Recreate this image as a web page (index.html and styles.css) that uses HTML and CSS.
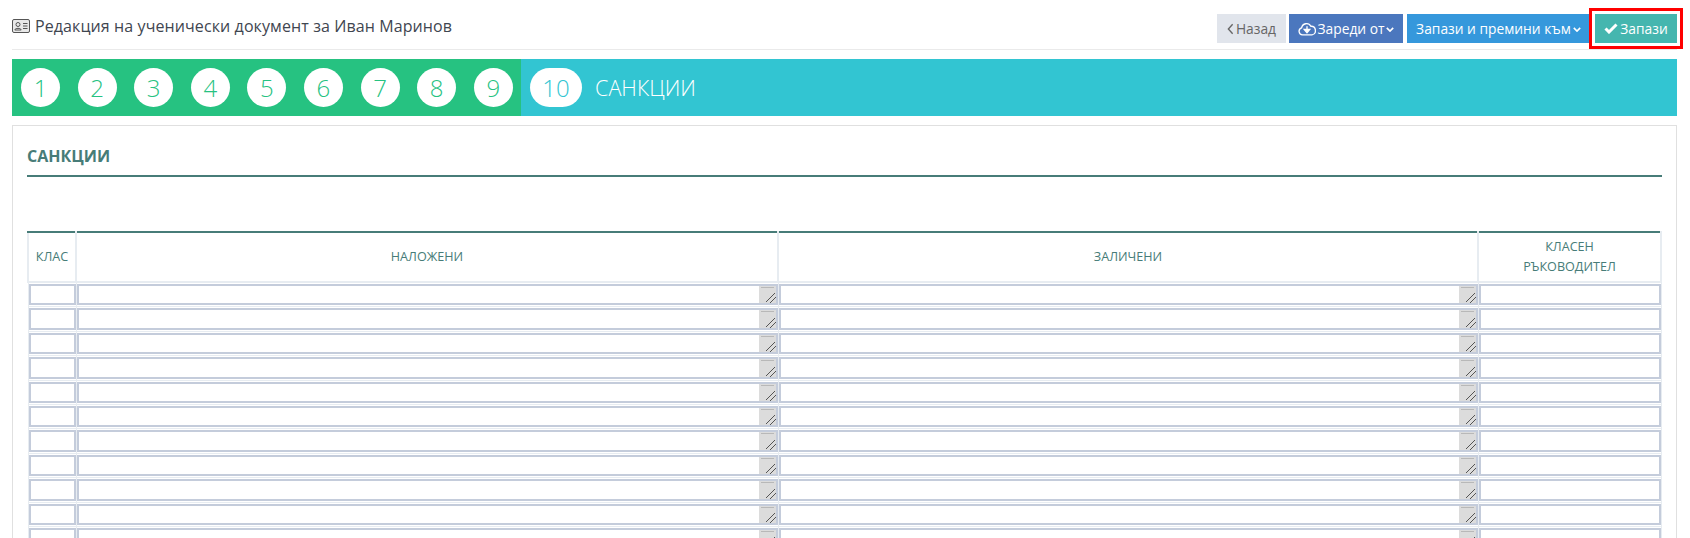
FILE: index.html
```html
<!DOCTYPE html>
<html lang="bg">
<head>
<meta charset="utf-8">
<title>Редакция на ученически документ</title>
<link rel="stylesheet" href="styles.css">
</head>
<body>
<header class="topbar">
  <h1 class="title">
    <svg class="id-icon" viewBox="0 0 18 14" width="18" height="14"><rect x="0.5" y="0.5" width="17" height="13" rx="1.5" fill="#e8e8e8" stroke="#555"/><circle cx="6" cy="5.5" r="2" fill="none" stroke="#555"/><path d="M2.8 11c.3-2.2 6.1-2.2 6.4 0z" fill="none" stroke="#555"/><path d="M11 4.5h4.5M11 7h4.5M11 9.5h4.5" stroke="#555"/></svg>
    Редакция на ученически документ за Иван Маринов
  </h1>
  <div class="actions">
    <button class="btn btn-back"><svg class="ic" viewBox="0 0 8 14" width="7" height="12"><path d="M6.5 1.5 1.5 7l5 5.5" fill="none" stroke="currentColor" stroke-width="1.6"/></svg>Назад</button>
    <button class="btn btn-load"><svg class="ic" viewBox="0 0 20 15" width="18" height="14"><path d="M5 14a4 4 0 0 1-1-7.800A5.500 5.500 0 0 1 14.300 4.500 4.800 4.800 0 0 1 15.500 14z" fill="none" stroke="currentColor" stroke-width="1.500"/><path d="M10 4.500v5M7 8l3 3.500L13 8z" stroke="currentColor" stroke-width="1.500" fill="currentColor"/></svg>Зареди от<svg class="chev" viewBox="0 0 10 6" width="8" height="5"><path d="M1 1l4 4 4-4" fill="none" stroke="currentColor" stroke-width="2"/></svg></button>
    <button class="btn btn-next">Запази и премини към<svg class="chev" viewBox="0 0 10 6" width="8" height="5"><path d="M1 1l4 4 4-4" fill="none" stroke="currentColor" stroke-width="2"/></svg></button>
    <button class="btn btn-save"><svg class="ic" viewBox="0 0 14 11" width="14" height="11"><path d="M1.500 5.500 5 9l7.500-7.500" fill="none" stroke="currentColor" stroke-width="3"/></svg>Запази</button>
  </div>
</header>

<nav class="steps">
  <div class="steps-done">
    <span class="step">1</span><span class="step">2</span><span class="step">3</span><span class="step">4</span><span class="step">5</span><span class="step">6</span><span class="step">7</span><span class="step">8</span><span class="step">9</span>
  </div>
  <div class="steps-current">
    <span class="step step-wide">10</span>
    <span class="step-name">САНКЦИИ</span>
  </div>
</nav>

<main class="card">
  <h2 class="section">САНКЦИИ</h2>
  <table class="grid">
    <colgroup><col class="c-class"><col class="c-first"><col class="c-second"><col class="c-teacher"></colgroup>
    <thead>
      <tr><th>КЛАС</th><th>НАЛОЖЕНИ</th><th>ЗАЛИЧЕНИ</th><th>КЛАСЕН<br>РЪКОВОДИТЕЛ</th></tr>
    </thead>
    <tbody>
      <tr><td><input class="field"></td><td><div class="area"><textarea class="field"></textarea><i class="grip"></i></div></td><td><div class="area"><textarea class="field"></textarea><i class="grip"></i></div></td><td><input class="field"></td></tr>
      <tr><td><input class="field"></td><td><div class="area"><textarea class="field"></textarea><i class="grip"></i></div></td><td><div class="area"><textarea class="field"></textarea><i class="grip"></i></div></td><td><input class="field"></td></tr>
      <tr><td><input class="field"></td><td><div class="area"><textarea class="field"></textarea><i class="grip"></i></div></td><td><div class="area"><textarea class="field"></textarea><i class="grip"></i></div></td><td><input class="field"></td></tr>
      <tr><td><input class="field"></td><td><div class="area"><textarea class="field"></textarea><i class="grip"></i></div></td><td><div class="area"><textarea class="field"></textarea><i class="grip"></i></div></td><td><input class="field"></td></tr>
      <tr><td><input class="field"></td><td><div class="area"><textarea class="field"></textarea><i class="grip"></i></div></td><td><div class="area"><textarea class="field"></textarea><i class="grip"></i></div></td><td><input class="field"></td></tr>
      <tr><td><input class="field"></td><td><div class="area"><textarea class="field"></textarea><i class="grip"></i></div></td><td><div class="area"><textarea class="field"></textarea><i class="grip"></i></div></td><td><input class="field"></td></tr>
      <tr><td><input class="field"></td><td><div class="area"><textarea class="field"></textarea><i class="grip"></i></div></td><td><div class="area"><textarea class="field"></textarea><i class="grip"></i></div></td><td><input class="field"></td></tr>
      <tr><td><input class="field"></td><td><div class="area"><textarea class="field"></textarea><i class="grip"></i></div></td><td><div class="area"><textarea class="field"></textarea><i class="grip"></i></div></td><td><input class="field"></td></tr>
      <tr><td><input class="field"></td><td><div class="area"><textarea class="field"></textarea><i class="grip"></i></div></td><td><div class="area"><textarea class="field"></textarea><i class="grip"></i></div></td><td><input class="field"></td></tr>
      <tr><td><input class="field"></td><td><div class="area"><textarea class="field"></textarea><i class="grip"></i></div></td><td><div class="area"><textarea class="field"></textarea><i class="grip"></i></div></td><td><input class="field"></td></tr>
      <tr><td><input class="field"></td><td><div class="area"><textarea class="field"></textarea><i class="grip"></i></div></td><td><div class="area"><textarea class="field"></textarea><i class="grip"></i></div></td><td><input class="field"></td></tr>
    </tbody>
  </table>
</main>
</body>
</html>
```

FILE: styles.css
```css
* { box-sizing: border-box; }
html, body { height: 538px; overflow: hidden; }
body { margin: 0; padding: 14px 13px 0 12px; background: #fff; font-family: "Open Sans", "Noto Sans", sans-serif; color: #3d3d3d; }

.topbar { display: flex; justify-content: space-between; align-items: flex-start; height: 36px; border-bottom: 1px solid #eaeaea; }
.title { display: flex; align-items: center; gap: 5px; margin: 1px 0 0; font-size: 16px; letter-spacing: 0.1px; font-weight: 400; line-height: 22px; color: #3f4650; }
.id-icon { flex: none; }

.actions { display: flex; gap: 3px; }
.btn { display: flex; align-items: center; justify-content: center; gap: 2px; height: 29px; border: 0; padding: 0; font-family: inherit; font-size: 13.8px; color: #fff; }
.btn-back { width: 69px; background: #e1e5ec; color: #666; }
.btn-load { width: 114px; background: #4b77be; }
.btn-next { width: 183px; margin-left: 1px; background: #3598dc; }
.btn-save { width: 82px; margin-left: 2px; background: #45b6af; outline: 3px solid #f00; outline-offset: 3px; }
.chev { margin-top: 2px; }

.steps { display: flex; height: 57px; margin-top: 9px; background: #32c5d2; }
.steps-done { display: flex; align-items: center; gap: 17.6px; width: 509px; padding-left: 9px; background: #26c281; }
.steps-current { display: flex; align-items: center; gap: 13px; padding-left: 9px; }
.step { display: flex; align-items: center; justify-content: center; width: 39px; height: 39px; border-radius: 50%; background: #fff; color: #26c281; font-size: 24px; font-weight: 340; }
.step-wide { width: 52px; border-radius: 20px; color: #32c5d2; }
.step-name { color: #fff; font-size: 21.6px; font-weight: 300; }

.card { margin-top: 9px; height: 413px; padding: 0 14px; overflow: hidden; border: 1px solid #e0e0e0; border-bottom: 0; }
.section { margin: 0; height: 51px; padding-top: 19px; border-bottom: 2px solid #477c78; font-size: 16px; line-height: 22px; font-weight: 700; color: #477c78; }

.grid { width: 1633px; margin: 54px 0 0 0; table-layout: fixed; border-collapse: collapse; }
.c-class { width: 48px; }
.c-first { width: 702px; }
.c-second { width: 700px; }
.c-teacher { width: 183px; }
.grid th { height: 50px; padding: 0; border: 1px solid #e7ecf1; border-width: 2px; border-top-color: #477c78; font-size: 12.6px; line-height: 20px; font-weight: 400; color: #477c78; text-align: center; }
.grid td { height: 24.4px; padding: 1px 0; border: 1px solid #e7ecf1; }
.field { display: block; width: 100%; height: 21.4px; margin: 0; padding: 0; border: 2px solid #c4ccdb; border-radius: 0; background: #fff; outline: 0; resize: none; overflow: hidden; }
.area { position: relative; }
.grip { position: absolute; right: 2px; top: 2px; bottom: 2px; width: 17px; background-color: #dcdcdc; background-image: linear-gradient(135deg, transparent 42%, #555 42%, #555 48%, transparent 48%, transparent 67%, #555 67%, #555 73%, transparent 73%); background-size: 10px 10px; background-position: right bottom; background-repeat: no-repeat; }
.grip::before { content: ""; position: absolute; left: 2px; right: 2px; top: 1px; height: 1px; background: #b8b8b8; }
```
